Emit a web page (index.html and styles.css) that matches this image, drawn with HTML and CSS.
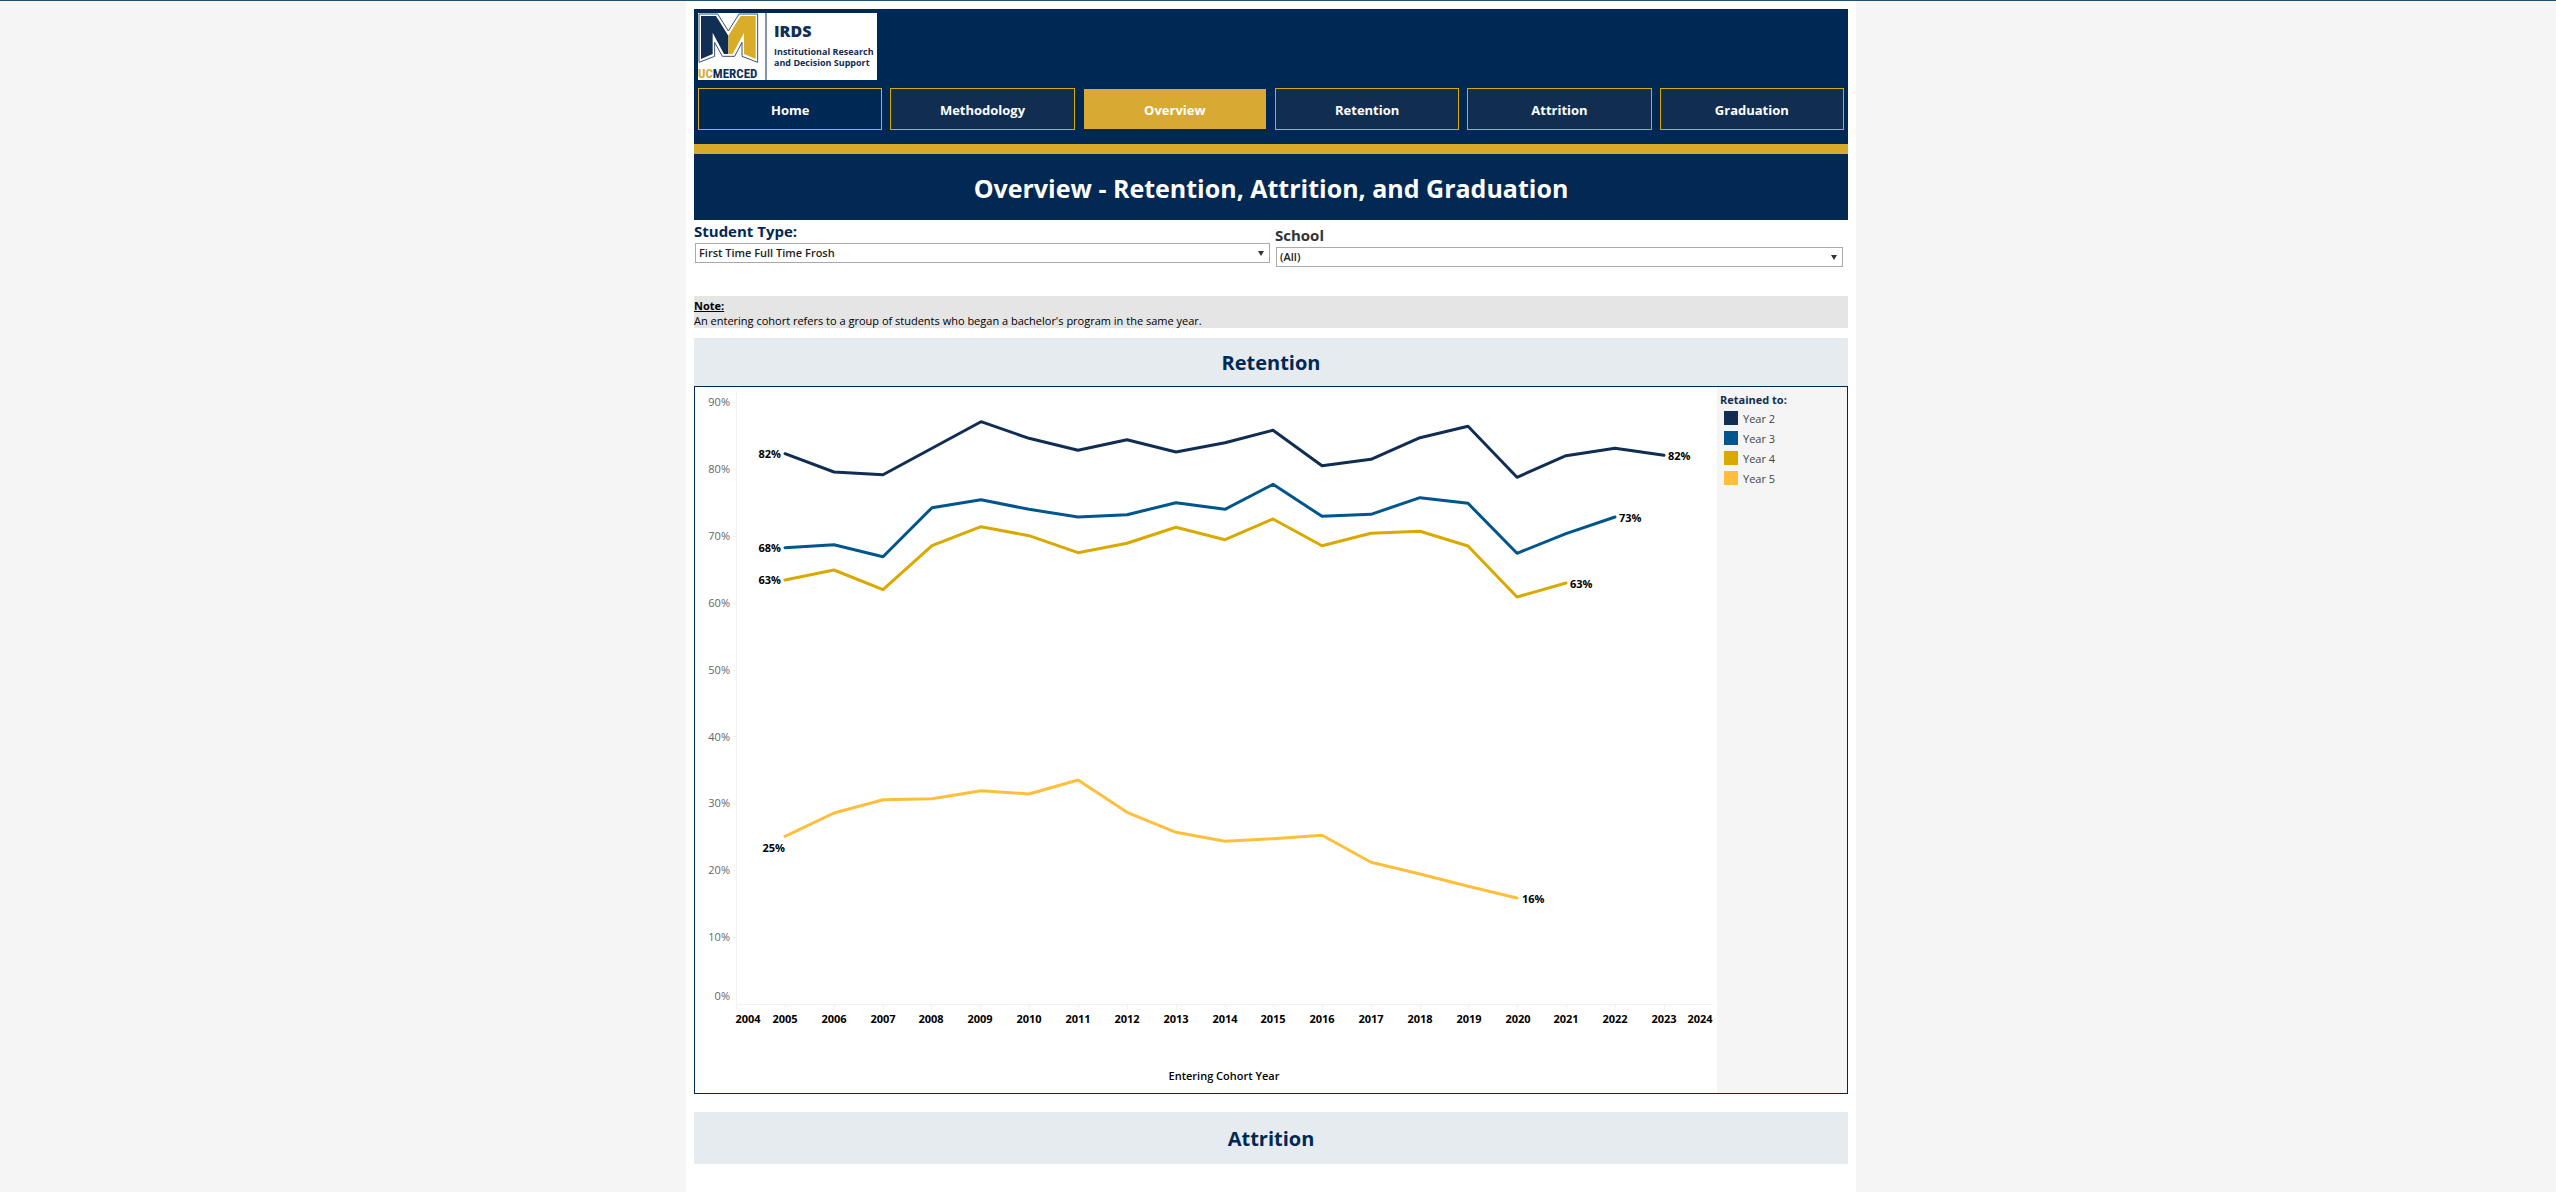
FILE: index.html
```html
<!DOCTYPE html>
<html lang="en">
<head>
<meta charset="utf-8">
<meta name="viewport" content="width=device-width, initial-scale=1">
<title>Overview - Retention, Attrition, and Graduation</title>
<link rel="stylesheet" href="styles.css">
</head>
<body>
<main class="dashboard">
  <header class="masthead">
    <svg class="logo" viewBox="0 0 179 67" role="img" aria-label="UC Merced Institutional Research and Decision Support">
      <rect width="179" height="67" fill="#fff"/>
      <svg x="0" y="0" width="61" height="51" viewBox="0 0 183 153">
        <path d="M3 3H59L91 54 123 3H179V148L132 130V88L110 130H73L50 88V130L3 148Z" fill="#fff" stroke="#3a5073" stroke-width="3"/>
        <path d="M9 9H54L91 68V123H78L44 59V123L9 138Z" fill="#112e54"/>
        <path d="M173 9H128L91 68V123H104L138 59V123L173 138Z" fill="#d9ac29"/>
      </svg>
      <text class="logo-name" x="0" y="65"><tspan class="logo-uc">UC</tspan>MERCED</text>
      <rect x="67" width="2" height="67" fill="#8594ac"/>
      <text class="logo-unit" x="76" y="24">IRDS</text>
      <text class="logo-line" x="76" y="42">Institutional Research</text>
      <text class="logo-line" x="76" y="53">and Decision Support</text>
    </svg>
    <nav class="tabs" aria-label="Dashboards">
      <a class="tab tab-home" href="#home">Home</a>
      <a class="tab" href="#methodology">Methodology</a>
      <a class="tab tab-current" href="#overview" aria-current="page">Overview</a>
      <a class="tab" href="#retention">Retention</a>
      <a class="tab" href="#attrition">Attrition</a>
      <a class="tab" href="#graduation">Graduation</a>
    </nav>
  </header>
  <h1 class="title">Overview - Retention, Attrition, and Graduation</h1>

  <form class="filters">
    <div class="filter">
      <label class="filter-label" for="student-type">Student Type:</label>
      <div class="select-box">
        <select id="student-type"><option>First Time Full Time Frosh</option></select>
      </div>
    </div>
    <div class="filter filter-school">
      <label class="filter-label" for="school">School</label>
      <div class="select-box">
        <select id="school"><option>(All)</option></select>
      </div>
    </div>
  </form>

  <section class="note">
    <h2 class="note-title">Note:</h2>
    <p class="note-text">An entering cohort refers to a group of students who began a bachelor's program in the same year.</p>
  </section>

  <h2 class="band" id="retention">Retention</h2>
  <section class="panel">
    <svg class="chart" viewBox="0 0 1022 706" role="img" aria-label="Retention by entering cohort year">
      <path class="axis" d="M41.500 4V617.500H1018M38 15.500h3M38 82.500h3M38 149.500h3M38 216.500h3M38 283.500h3M38 349.500h3M38 416.500h3M38 483.500h3M38 550.500h3M41.500 618v4M90.500 618v4M139.500 618v4M188.500 618v4M236.500 618v4M285.500 618v4M334.500 618v4M383.500 618v4M432.500 618v4M481.500 618v4M530.500 618v4M578.500 618v4M627.500 618v4M676.500 618v4M725.500 618v4M773.500 618v4M822.500 618v4M871.500 618v4M920.500 618v4M969.500 618v4"/>
      <g class="y-labels">
        <text x="35" y="19">90%</text>
        <text x="35" y="86">80%</text>
        <text x="35" y="153">70%</text>
        <text x="35" y="220">60%</text>
        <text x="35" y="287">50%</text>
        <text x="35" y="354">40%</text>
        <text x="35" y="420">30%</text>
        <text x="35" y="487">20%</text>
        <text x="35" y="554">10%</text>
        <text x="35" y="613">0%</text>
      </g>
      <g class="x-labels">
        <text x="53" y="636">2004</text>
        <text x="90" y="636">2005</text>
        <text x="139" y="636">2006</text>
        <text x="188" y="636">2007</text>
        <text x="236" y="636">2008</text>
        <text x="285" y="636">2009</text>
        <text x="334" y="636">2010</text>
        <text x="383" y="636">2011</text>
        <text x="432" y="636">2012</text>
        <text x="481" y="636">2013</text>
        <text x="530" y="636">2014</text>
        <text x="578" y="636">2015</text>
        <text x="627" y="636">2016</text>
        <text x="676" y="636">2017</text>
        <text x="725" y="636">2018</text>
        <text x="774" y="636">2019</text>
        <text x="823" y="636">2020</text>
        <text x="871" y="636">2021</text>
        <text x="920" y="636">2022</text>
        <text x="969" y="636">2023</text>
        <text x="1005" y="636">2024</text>
        <text class="axis-title" x="529" y="693">Entering Cohort Year</text>
      </g>
      <g class="series">
        <polyline class="year-2" points="90,66.700 139,85 188,87.700 237,61.300 286,34.700 334,51.300 383,63.300 432,52.700 481,65 530,55.700 578,43.300 627,78.700 676,72.300 725,50.700 773,39.300 822,90.300 871,68.700 920,61.300 969,68.300"/>
        <polyline class="year-3" points="90,160.700 139,157.700 188,169.700 237,120.700 286,112.700 334,122.300 383,130 432,127.700 481,115.700 530,122.300 578,97.300 627,129.300 676,127.300 725,110.700 773,116.300 822,166.300 871,146.700 920,130"/>
        <polyline class="year-4" points="90,193 139,183 188,202.700 237,158.700 286,139.700 334,148.700 383,165.700 432,156.300 481,140.300 530,152.700 578,132 627,158.700 676,146.300 725,144.300 773,159 822,210 871,196"/>
        <polyline class="year-5" points="90,449.300 139,426 188,412.700 237,411.700 286,403.700 334,407 383,393 432,425.300 481,445.300 530,454.300 578,451.700 627,448.300 676,475.300 725,487 773,499.300 822,511"/>
      </g>
      <g class="point-labels">
        <text class="at-start" x="86" y="71">82%</text>
        <text class="at-start" x="86" y="165">68%</text>
        <text class="at-start" x="86" y="197">63%</text>
        <text class="at-start" x="90" y="465">25%</text>
        <text x="973" y="73">82%</text>
        <text x="924" y="135">73%</text>
        <text x="875" y="201">63%</text>
        <text x="827" y="516">16%</text>
      </g>
    </svg>
    <aside class="legend">
      <h3 class="legend-title">Retained to:</h3>
      <ul class="legend-list">
        <li><span class="swatch swatch-2"></span>Year 2</li>
        <li><span class="swatch swatch-3"></span>Year 3</li>
        <li><span class="swatch swatch-4"></span>Year 4</li>
        <li><span class="swatch swatch-5"></span>Year 5</li>
      </ul>
    </aside>
  </section>

  <h2 class="band band-tall" id="attrition">Attrition</h2>
</main>
</body>
</html>
```
FILE: styles.css
```css
:root {
  --navy: #002855;
  --navy-soft: #112e51;
  --gold: #daa900;
  --gold-bar: #d7ab29;
  --font: "Open Sans", "Noto Sans", sans-serif;
}

* {
  box-sizing: border-box;
}

body {
  margin: 0;
  padding-right: 14px;
  border-top: 1px solid #1f4e79;
  background: #f5f5f5;
  color: #000;
  font-family: var(--font);
  font-size: 11px;
}

h1, h2, h3, p, ul {
  margin: 0;
  padding: 0;
}

h1, h2, h3 {
  font-weight: 700;
}

.dashboard {
  max-width: 1170px;
  min-height: calc(100vh - 1px);
  margin: 0 auto;
  padding: 8px 8px 28px;
  background: #fff;
}

.masthead {
  padding: 4px 4px 14px;
  border-bottom: 10px solid var(--gold-bar);
  background: var(--navy);
}

.logo {
  display: block;
  width: 179px;
  height: 67px;
}

.logo text {
  fill: #112e54;
  font-weight: 700;
}

.logo .logo-name {
  font-family: "Roboto Condensed", Roboto, sans-serif;
  font-size: 13px;
}

.logo .logo-uc {
  fill: #d9ac29;
}

.logo .logo-unit {
  font-size: 16px;
  font-weight: 800;
}

.logo .logo-line {
  font-size: 9px;
}

.tabs {
  display: grid;
  grid-template-columns: repeat(6, 1fr);
  gap: 8px;
  margin-top: 8px;
}

.tab {
  height: 42px;
  border: 1px solid var(--gold);
  background: var(--navy-soft);
  color: #fff;
  font-size: 13px;
  font-weight: 700;
  line-height: 42px;
  text-align: center;
  text-decoration: none;
}

.tab-home {
  border-color: var(--gold-bar);
  background: var(--navy);
}

.tab-current {
  border-color: var(--navy);
  background: #d9aa33;
}

.title {
  padding-top: 2px;
  background: #022954;
  color: #fff;
  font-size: 25px;
  line-height: 64px;
  text-align: center;
}

.filters {
  display: grid;
  grid-template-columns: 581fr 573fr;
  align-items: start;
  padding-top: 1px;
}

.filter-label {
  display: block;
  padding-bottom: 2px;
  color: var(--navy);
  font-size: 15px;
  font-weight: 700;
  line-height: 20px;
}

.filter-school {
  padding-top: 4px;
}

.filter-school .filter-label {
  color: #333;
}

.select-box {
  position: relative;
  margin: 0 5px 0 1px;
}

.select-box::after {
  content: "";
  position: absolute;
  top: 8px;
  right: 6px;
  border: 3px solid transparent;
  border-top: 5px solid #333;
  border-bottom: 0;
  pointer-events: none;
}

.select-box select {
  display: block;
  width: 100%;
  height: 20px;
  padding: 0 3px;
  border: 1px solid #aaa;
  border-radius: 0;
  appearance: none;
  background: #fff;
  color: #222;
  font: 600 11px/18px var(--font);
}

.note {
  margin-top: 29px;
  padding-top: 2px;
  background: #e5e5e5;
  line-height: 15px;
}

.note-title {
  font-size: 11px;
  text-decoration: underline;
}

.band {
  margin-top: 10px;
  padding-top: 2px;
  background: #e6ebef;
  color: var(--navy);
  font-size: 20px;
  line-height: 46px;
  text-align: center;
}

.band-tall {
  margin-top: 18px;
  padding: 4px 0 2px;
}

.panel {
  display: grid;
  grid-template-columns: 1fr 130px;
  border: 1px solid var(--navy);
}

.chart {
  display: block;
  width: 100%;
  height: auto;
}

.axis {
  fill: none;
  stroke: #f0f0f0;
}

.y-labels {
  fill: #666;
  font-size: 11px;
  text-anchor: end;
}

.x-labels {
  font-size: 11px;
  font-weight: 700;
  text-anchor: middle;
}

.axis-title {
  font-weight: 600;
}

.point-labels {
  font-size: 11px;
  font-weight: 700;
}

.at-start {
  text-anchor: end;
}

.series {
  fill: none;
  stroke-width: 3;
  stroke-linejoin: round;
  stroke-linecap: round;
}

.year-2 {
  stroke: #112d53;
}

.year-3 {
  stroke: #00558c;
}

.year-4 {
  stroke: #daa900;
}

.year-5 {
  stroke: #ffbf3c;
}

.legend {
  padding: 4px 3px;
  background: #f5f5f5;
  color: #444;
}

.legend-title {
  color: var(--navy-soft);
  font-size: 11px;
  line-height: 17px;
}

.legend-list {
  list-style: none;
}

.legend-list li {
  display: flex;
  align-items: center;
  gap: 5px;
  height: 20px;
  padding-left: 4px;
}

.swatch {
  width: 14px;
  height: 14px;
}

.swatch-2 {
  background: #112d53;
}

.swatch-3 {
  background: #00558c;
}

.swatch-4 {
  background: #daa900;
}

.swatch-5 {
  background: #ffbf3c;
}
```
